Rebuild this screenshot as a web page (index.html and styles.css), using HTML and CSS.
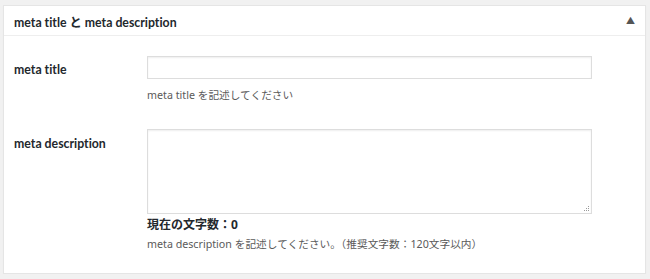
FILE: index.html
```html
<!DOCTYPE html>
<html lang="ja">
<head>
<meta charset="utf-8">
<link rel="stylesheet" href="styles.css">
</head>
<body>
<div class="postbox">
  <div class="hndle">
    <h2 class="title">meta title と meta description</h2>
    <span class="toggle">▲</span>
  </div>
  <div class="inside">
    <div class="row">
      <div class="label">meta title</div>
      <div class="field">
        <input type="text" class="text-input">
        <p class="desc">meta title を記述してください</p>
      </div>
    </div>
    <div class="row row-desc">
      <div class="label">meta description</div>
      <div class="field">
        <div class="ta-wrap">
          <textarea class="textarea"></textarea>
          <svg class="grip" width="7" height="7" viewBox="0 0 7 7">
            <rect x="5" y="1" width="1" height="1"/>
            <rect x="3" y="3" width="1" height="1"/>
            <rect x="5" y="3" width="1" height="1"/>
            <rect x="1" y="5" width="1" height="1"/>
            <rect x="3" y="5" width="1" height="1"/>
            <rect x="5" y="5" width="1" height="1"/>
          </svg>
        </div>
        <p class="count">現在の文字数：0</p>
        <p class="desc">meta description を記述してください。（推奨文字数：120文字以内）</p>
      </div>
    </div>
  </div>
</div>
</body>
</html>
```
FILE: styles.css
```css
html, body {
  margin: 0;
  padding: 0;
  background: #f1f1f1;
}
body {
  padding: 5px 4px 0 3px;
  font-family: "Noto Sans", "Noto Sans CJK JP", sans-serif;
  color: #23282d;
  font-variant-ligatures: none;
}
.postbox {
  background: #fff;
  border: 1px solid #e5e5e5;
  box-shadow: 0 1px 1px rgba(0,0,0,0.04);
  height: 269px;
  box-sizing: border-box;
}
.hndle {
  height: 30px;
  border-bottom: 1px solid #eee;
  display: flex;
  align-items: center;
  justify-content: space-between;
  padding: 2px 10px 0 10px;
  box-sizing: border-box;
}
.title {
  margin: 0;
  font-family: "Lato", "Noto Sans CJK JP", sans-serif;
  font-size: 12.3px;
  font-weight: 700;
  color: #23282d;
}
.toggle {
  font-size: 9px;
  color: #555;
  margin-top: -3px;
}
.inside {
  padding: 20px 0 0 10px;
}
.row {
  display: flex;
}
.row-desc {
  margin-top: 26px;
}
.label {
  width: 133px;
  font-family: "Lato", "Noto Sans CJK JP", sans-serif;
  font-size: 12.3px;
  font-weight: 700;
  color: #23282d;
  padding-top: 6px;
}
.row-desc .label {
  padding-top: 7px;
}
.field {
  display: flex;
  flex-direction: column;
}
.text-input {
  width: 445px;
  height: 23px;
  box-sizing: border-box;
  border: 1px solid #ddd;
  box-shadow: inset 0 1px 2px rgba(0,0,0,0.07);
  margin: 0;
  padding: 2px 4px;
}
.ta-wrap {
  position: relative;
  width: 445px;
  height: 85px;
}
.textarea {
  display: block;
  width: 445px;
  height: 85px;
  box-sizing: border-box;
  border: 1px solid #ddd;
  box-shadow: inset 0 1px 2px rgba(0,0,0,0.07);
  margin: 0;
  padding: 2px 4px;
  resize: none;
}
.grip {
  position: absolute;
  right: 2px;
  bottom: 2px;
  fill: #9a9a9a;
}
.desc {
  margin: 8px 0 0;
  font-size: 10.7px;
  color: #5a5a5a;
  line-height: 16px;
}
.count {
  margin: 3px 0 0;
  font-size: 12px;
  font-weight: 700;
  color: #23282d;
  line-height: 16px;
}
.count + .desc {
  margin-top: 3px;
}
```
